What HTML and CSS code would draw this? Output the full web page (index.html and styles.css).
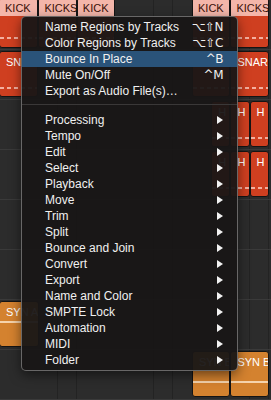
FILE: index.html
```html
<!DOCTYPE html>
<html>
<head>
<meta charset="utf-8">
<link rel="stylesheet" href="styles.css">
</head>
<body>
<div class="arrange">
  <div class="track">
    <div class="region red hdr" style="left:-1px;width:39.4px"><div class="head">KICK</div><div class="dash"></div></div>
    <div class="region red hdr" style="left:38.4px;width:38.4px"><div class="head">KICKS</div><div class="dash"></div></div>
    <div class="region red hdr" style="left:76.8px;width:38.4px"><div class="head">KICK</div><div class="dash"></div></div>
    <div class="region red hdr" style="left:192px;width:38.4px"><div class="head">KICK</div><div class="dash"></div></div>
    <div class="region red hdr" style="left:230.4px;width:38.4px"><div class="head">KICKS</div><div class="dash"></div></div>
  </div>
  <div class="track">
    <div class="region red" style="left:-1px;width:39.4px"><div class="label">SNAR</div><div class="dash"></div></div>
    <div class="region red" style="left:192px;width:38.4px"><div class="label">SNAR</div><div class="dash"></div></div>
    <div class="region red" style="left:230.4px;width:38.4px"><div class="label">SNAR</div><div class="dash"></div></div>
  </div>
  <div class="track">
    <div class="region red" style="left:211.2px;width:19.2px"><div class="label">H</div><div class="dash"></div></div>
    <div class="region red" style="left:230.4px;width:19.2px"><div class="label">H</div><div class="dash"></div></div>
    <div class="region red" style="left:249.6px;width:19.2px"><div class="label">H</div><div class="dash"></div></div>
  </div>
  <div class="track">
    <div class="region red" style="left:211.2px;width:19.2px"><div class="label">H</div><div class="dash"></div></div>
    <div class="region red" style="left:230.4px;width:19.2px"><div class="label">H</div><div class="dash"></div></div>
    <div class="region red" style="left:249.6px;width:19.2px"><div class="label">H</div><div class="dash"></div></div>
  </div>
  <div class="track"></div>
  <div class="track"></div>
  <div class="track">
    <div class="region orange sy" style="left:-1px;width:40px"><div class="label">SYN A</div><div class="line"></div></div>
  </div>
  <div class="track">
    <div class="region orange syb" style="left:192px;width:38.4px"><div class="label">SYN B</div><div class="line"></div></div>
    <div class="region orange syb" style="left:230.4px;width:38.4px"><div class="label">SYN B</div><div class="line"></div></div>
  </div>
</div>

<div class="menu">
  <div class="item"><span>Name Regions by Tracks</span><span class="key">⌥⇧N</span></div>
  <div class="item"><span>Color Regions by Tracks</span><span class="key">⌥⇧C</span></div>
  <div class="item active"><span>Bounce In Place</span><span class="key">^B</span></div>
  <div class="item"><span>Mute On/Off</span><span class="key">^M</span></div>
  <div class="item"><span>Export as Audio File(s)…</span></div>
  <div class="sep"></div>
  <div class="item sub"><span>Processing</span><i class="arrow"></i></div>
  <div class="item sub"><span>Tempo</span><i class="arrow"></i></div>
  <div class="item sub"><span>Edit</span><i class="arrow"></i></div>
  <div class="item sub"><span>Select</span><i class="arrow"></i></div>
  <div class="item sub"><span>Playback</span><i class="arrow"></i></div>
  <div class="item sub"><span>Move</span><i class="arrow"></i></div>
  <div class="item sub"><span>Trim</span><i class="arrow"></i></div>
  <div class="item sub"><span>Split</span><i class="arrow"></i></div>
  <div class="item sub"><span>Bounce and Join</span><i class="arrow"></i></div>
  <div class="item sub"><span>Convert</span><i class="arrow"></i></div>
  <div class="item sub"><span>Export</span><i class="arrow"></i></div>
  <div class="item sub"><span>Name and Color</span><i class="arrow"></i></div>
  <div class="item sub"><span>SMPTE Lock</span><i class="arrow"></i></div>
  <div class="item sub"><span>Automation</span><i class="arrow"></i></div>
  <div class="item sub"><span>MIDI</span><i class="arrow"></i></div>
  <div class="item sub"><span>Folder</span><i class="arrow"></i></div>
</div>
</body>
</html>
```

FILE: styles.css
```css
html, body {
  margin: 0;
  padding: 0;
  width: 271px;
  height: 400px;
  overflow: hidden;
  background: #2b2b2b;
  font-family: "Liberation Sans", Arial, sans-serif;
}

.arrange {
  display: flex;
  flex-direction: column;
  width: 271px;
  height: 400px;
  background-color: #2c2c2c;
  background-image: repeating-linear-gradient(90deg, transparent 0, transparent 37.9px, #222 37.9px, #222 38.4px);
}

.track {
  position: relative;
  height: 49px;
  border-bottom: 1px solid #3a3a3a;
  flex: none;
  background-image: repeating-linear-gradient(90deg, transparent 0, transparent 18.7px, #232323 18.7px, #232323 19.2px);
}

.region {
  position: absolute;
  top: 1px;
  height: 46px;
  box-sizing: border-box;
  border: 1px solid #141414;
  border-radius: 3px;
  overflow: hidden;
  white-space: nowrap;
}

.track:first-child .region {
  top: -2px;
  height: 50px;
}

.red { background: #cf3f20; }
.orange { background: #d4822f; }

.head {
  height: 17px;
  background: #f4b6aa;
  color: #3a1008;
  font-size: 11px;
  line-height: 19px;
  padding-left: 5px;
}

.label {
  color: #ffffff;
  font-size: 11px;
  line-height: 14px;
  padding: 3px 0 0 6px;
}

.dash {
  position: absolute;
  left: 0;
  right: 0;
  top: 35px;
  height: 2px;
  background-image: repeating-linear-gradient(90deg, #f3b0a0 0, #f3b0a0 4px, transparent 4px, transparent 7px);
}

.track:first-child .dash { top: 38px; }

.line {
  position: absolute;
  left: 0;
  right: 0;
  height: 2px;
  background: #f6d3ac;
}

.sy .line { top: 19px; }
.syb .line { top: 29px; }

.menu {
  position: absolute;
  left: 21px;
  top: 16px;
  width: 217px;
  height: 355px;
  box-sizing: border-box;
  padding: 2px 0;
  background: rgba(24, 22, 22, 0.95);
  border: 1px solid rgba(170, 170, 170, 0.55);
  border-radius: 5px;
  box-shadow: 0 4px 12px rgba(0, 0, 0, 0.5);
  color: #f0f0f0;
  font-size: 12px;
}

.item {
  display: flex;
  justify-content: space-between;
  align-items: center;
  height: 16px;
  padding: 0 14px 0 23px;
  white-space: nowrap;
}

.item.active {
  background: #2a5379;
}

.key {
  font-family: "DejaVu Sans", sans-serif;
  font-size: 12px;
  letter-spacing: -0.5px;
}

.sep {
  height: 1px;
  margin: 5px 0 7px;
  background: #3a3838;
}

.arrow {
  width: 0;
  height: 0;
  border-top: 4px solid transparent;
  border-bottom: 4px solid transparent;
  border-left: 6px solid #f2f2f2;
}
```
